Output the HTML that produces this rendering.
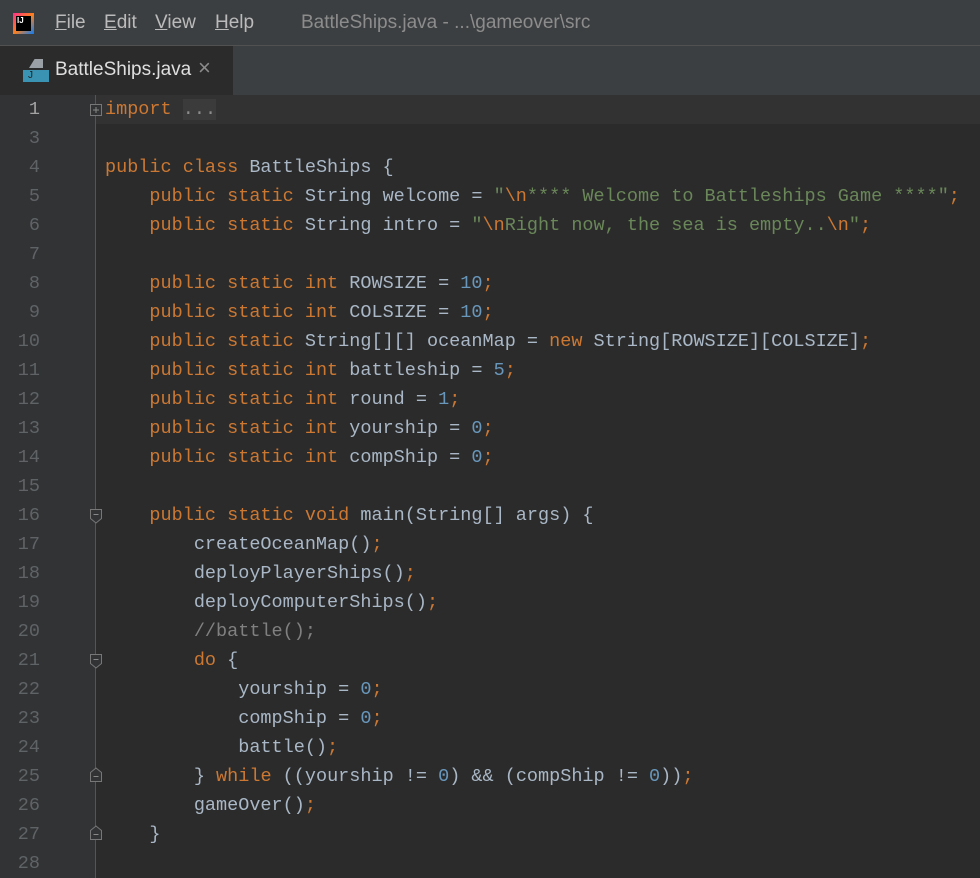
<!DOCTYPE html>
<html><head><style>
*{margin:0;padding:0;box-sizing:border-box}
body{width:980px;height:878px;overflow:hidden;background:#2b2b2b;font-family:"Liberation Sans",sans-serif;position:relative}
#menu{position:absolute;left:0;top:0;width:980px;height:46px;background:#3c3f41;border-bottom:1px solid #515151;color:#bbbbbb;font-size:19px}
#menu span{position:absolute;top:12px}
#tabs{position:absolute;left:0;top:46px;width:980px;height:49px;background:#3c3f41}
#tab{position:absolute;left:0;top:0;width:233px;height:49px;background:#2b2b2b}
#gutter{position:absolute;left:0;top:95px;width:96px;height:783px;background:#313335}
#gline{position:absolute;left:95px;top:95px;width:1px;height:783px;background:#555}
.row{position:absolute;left:0;height:29px;width:980px;font-family:"Liberation Mono",monospace;font-size:18.5px;line-height:27px;padding-top:1px;white-space:pre;overflow:hidden}
.n{position:absolute;left:0;width:40px;text-align:right;color:#606366}
.c{position:absolute;left:105px;color:#a9b7c6}
.k{color:#cc7832}.s{color:#6a8759}.d{color:#6897bb}.m{color:#808080}
svg.f{position:absolute;left:88px}
</style></head><body>
<div id="menu">
<div style="position:absolute;left:13px;top:13px;width:21px;height:21px;background:linear-gradient(135deg,#ff318c,#fc801d 50%,#087cfa);"><div style="position:absolute;left:3px;top:3px;width:15px;height:15px;background:#000;color:#fff;font-size:8px;font-weight:bold;line-height:9px;padding-left:1px">IJ</div></div>
<span style="left:55px"><u>F</u>ile</span>
<span style="left:104px"><u>E</u>dit</span>
<span style="left:155px"><u>V</u>iew</span>
<span style="left:215px"><u>H</u>elp</span>
<span style="left:301px;color:#8c8c8c">BattleShips.java - ...\gameover\src</span>
</div>
<div id="tabs"><div id="tab">
<div style="position:absolute;left:23px;top:13px;width:26px;height:22px">
<div style="position:absolute;left:6px;top:0;width:14px;height:9px;background:#9aa0a6;clip-path:polygon(40% 0,100% 0,100% 100%,0 100%)"></div>
<div style="position:absolute;left:0;top:11px;width:26px;height:12px;background:#40b6e0;opacity:.75;color:#1b1b1b;font-size:10px;line-height:12px;padding-left:5px">J</div></div>
<span style="position:absolute;left:55px;top:13px;color:#dfdfdf;font-size:19px">BattleShips.java</span>
<span style="position:absolute;left:198px;top:9px;color:#8c8c8c;font-size:22px">×</span>
</div></div>
<div id="gutter"></div>
<div style="position:absolute;left:96px;top:95px;width:884px;height:29px;background:#323232"></div>
<div id="gline"></div>
<div class="row" style="top:95px"><span class="n" style="color:#a4a3a3">1</span><span class="c"><span class="k">import</span> <span style="background:#3b3b3b;color:#8c8c8c">...</span></span></div>
<svg class="f" style="top:102px" width="16" height="16"><rect x="2.5" y="2.5" width="11" height="11" fill="#313335" stroke="#777"/><path d="M5 8h6M8 5v6" stroke="#888"/></svg>
<div class="row" style="top:124px"><span class="n">3</span></div>
<div class="row" style="top:153px"><span class="n">4</span><span class="c"><span class="k">public class </span>BattleShips {</span></div>
<div class="row" style="top:182px"><span class="n">5</span><span class="c">    <span class="k">public static </span>String welcome = <span class="s">"<span class="k">\n</span>**** Welcome to Battleships Game ****"</span><span class="k">;</span></span></div>
<div class="row" style="top:211px"><span class="n">6</span><span class="c">    <span class="k">public static </span>String intro = <span class="s">"<span class="k">\n</span>Right now, the sea is empty..<span class="k">\n</span>"</span><span class="k">;</span></span></div>
<div class="row" style="top:240px"><span class="n">7</span></div>
<div class="row" style="top:269px"><span class="n">8</span><span class="c">    <span class="k">public static int </span>ROWSIZE = <span class="d">10</span><span class="k">;</span></span></div>
<div class="row" style="top:298px"><span class="n">9</span><span class="c">    <span class="k">public static int </span>COLSIZE = <span class="d">10</span><span class="k">;</span></span></div>
<div class="row" style="top:327px"><span class="n">10</span><span class="c">    <span class="k">public static </span>String[][] oceanMap = <span class="k">new </span>String[ROWSIZE][COLSIZE]<span class="k">;</span></span></div>
<div class="row" style="top:356px"><span class="n">11</span><span class="c">    <span class="k">public static int </span>battleship = <span class="d">5</span><span class="k">;</span></span></div>
<div class="row" style="top:385px"><span class="n">12</span><span class="c">    <span class="k">public static int </span>round = <span class="d">1</span><span class="k">;</span></span></div>
<div class="row" style="top:414px"><span class="n">13</span><span class="c">    <span class="k">public static int </span>yourship = <span class="d">0</span><span class="k">;</span></span></div>
<div class="row" style="top:443px"><span class="n">14</span><span class="c">    <span class="k">public static int </span>compShip = <span class="d">0</span><span class="k">;</span></span></div>
<div class="row" style="top:472px"><span class="n">15</span></div>
<div class="row" style="top:501px"><span class="n">16</span><span class="c">    <span class="k">public static void </span>main(String[] args) {</span></div>
<div class="row" style="top:530px"><span class="n">17</span><span class="c">        createOceanMap()<span class="k">;</span></span></div>
<div class="row" style="top:559px"><span class="n">18</span><span class="c">        deployPlayerShips()<span class="k">;</span></span></div>
<div class="row" style="top:588px"><span class="n">19</span><span class="c">        deployComputerShips()<span class="k">;</span></span></div>
<div class="row" style="top:617px"><span class="n">20</span><span class="c">        <span class="m">//battle();</span></span></div>
<div class="row" style="top:646px"><span class="n">21</span><span class="c">        <span class="k">do </span>{</span></div>
<div class="row" style="top:675px"><span class="n">22</span><span class="c">            yourship = <span class="d">0</span><span class="k">;</span></span></div>
<div class="row" style="top:704px"><span class="n">23</span><span class="c">            compShip = <span class="d">0</span><span class="k">;</span></span></div>
<div class="row" style="top:733px"><span class="n">24</span><span class="c">            battle()<span class="k">;</span></span></div>
<div class="row" style="top:762px"><span class="n">25</span><span class="c">        } <span class="k">while </span>((yourship != <span class="d">0</span>) &amp;&amp; (compShip != <span class="d">0</span>))<span class="k">;</span></span></div>
<div class="row" style="top:791px"><span class="n">26</span><span class="c">        gameOver()<span class="k">;</span></span></div>
<div class="row" style="top:820px"><span class="n">27</span><span class="c">    }</span></div>
<div class="row" style="top:849px"><span class="n">28</span></div>
<svg class="f" style="top:507px" width="16" height="18"><path d="M2.5 2.5h11v9l-5.5 4.5l-5.5-4.5z" fill="#313335" stroke="#777"/><path d="M5.5 7.5h5" stroke="#888"/></svg>
<svg class="f" style="top:652px" width="16" height="18"><path d="M2.5 2.5h11v9l-5.5 4.5l-5.5-4.5z" fill="#313335" stroke="#777"/><path d="M5.5 7.5h5" stroke="#888"/></svg>
<svg class="f" style="top:766px" width="16" height="18"><path d="M2.5 15.5h11v-9l-5.5-4.5l-5.5 4.5z" fill="#313335" stroke="#777"/><path d="M5.5 10.5h5" stroke="#888"/></svg>
<svg class="f" style="top:824px" width="16" height="18"><path d="M2.5 15.5h11v-9l-5.5-4.5l-5.5 4.5z" fill="#313335" stroke="#777"/><path d="M5.5 10.5h5" stroke="#888"/></svg>
</body></html>
